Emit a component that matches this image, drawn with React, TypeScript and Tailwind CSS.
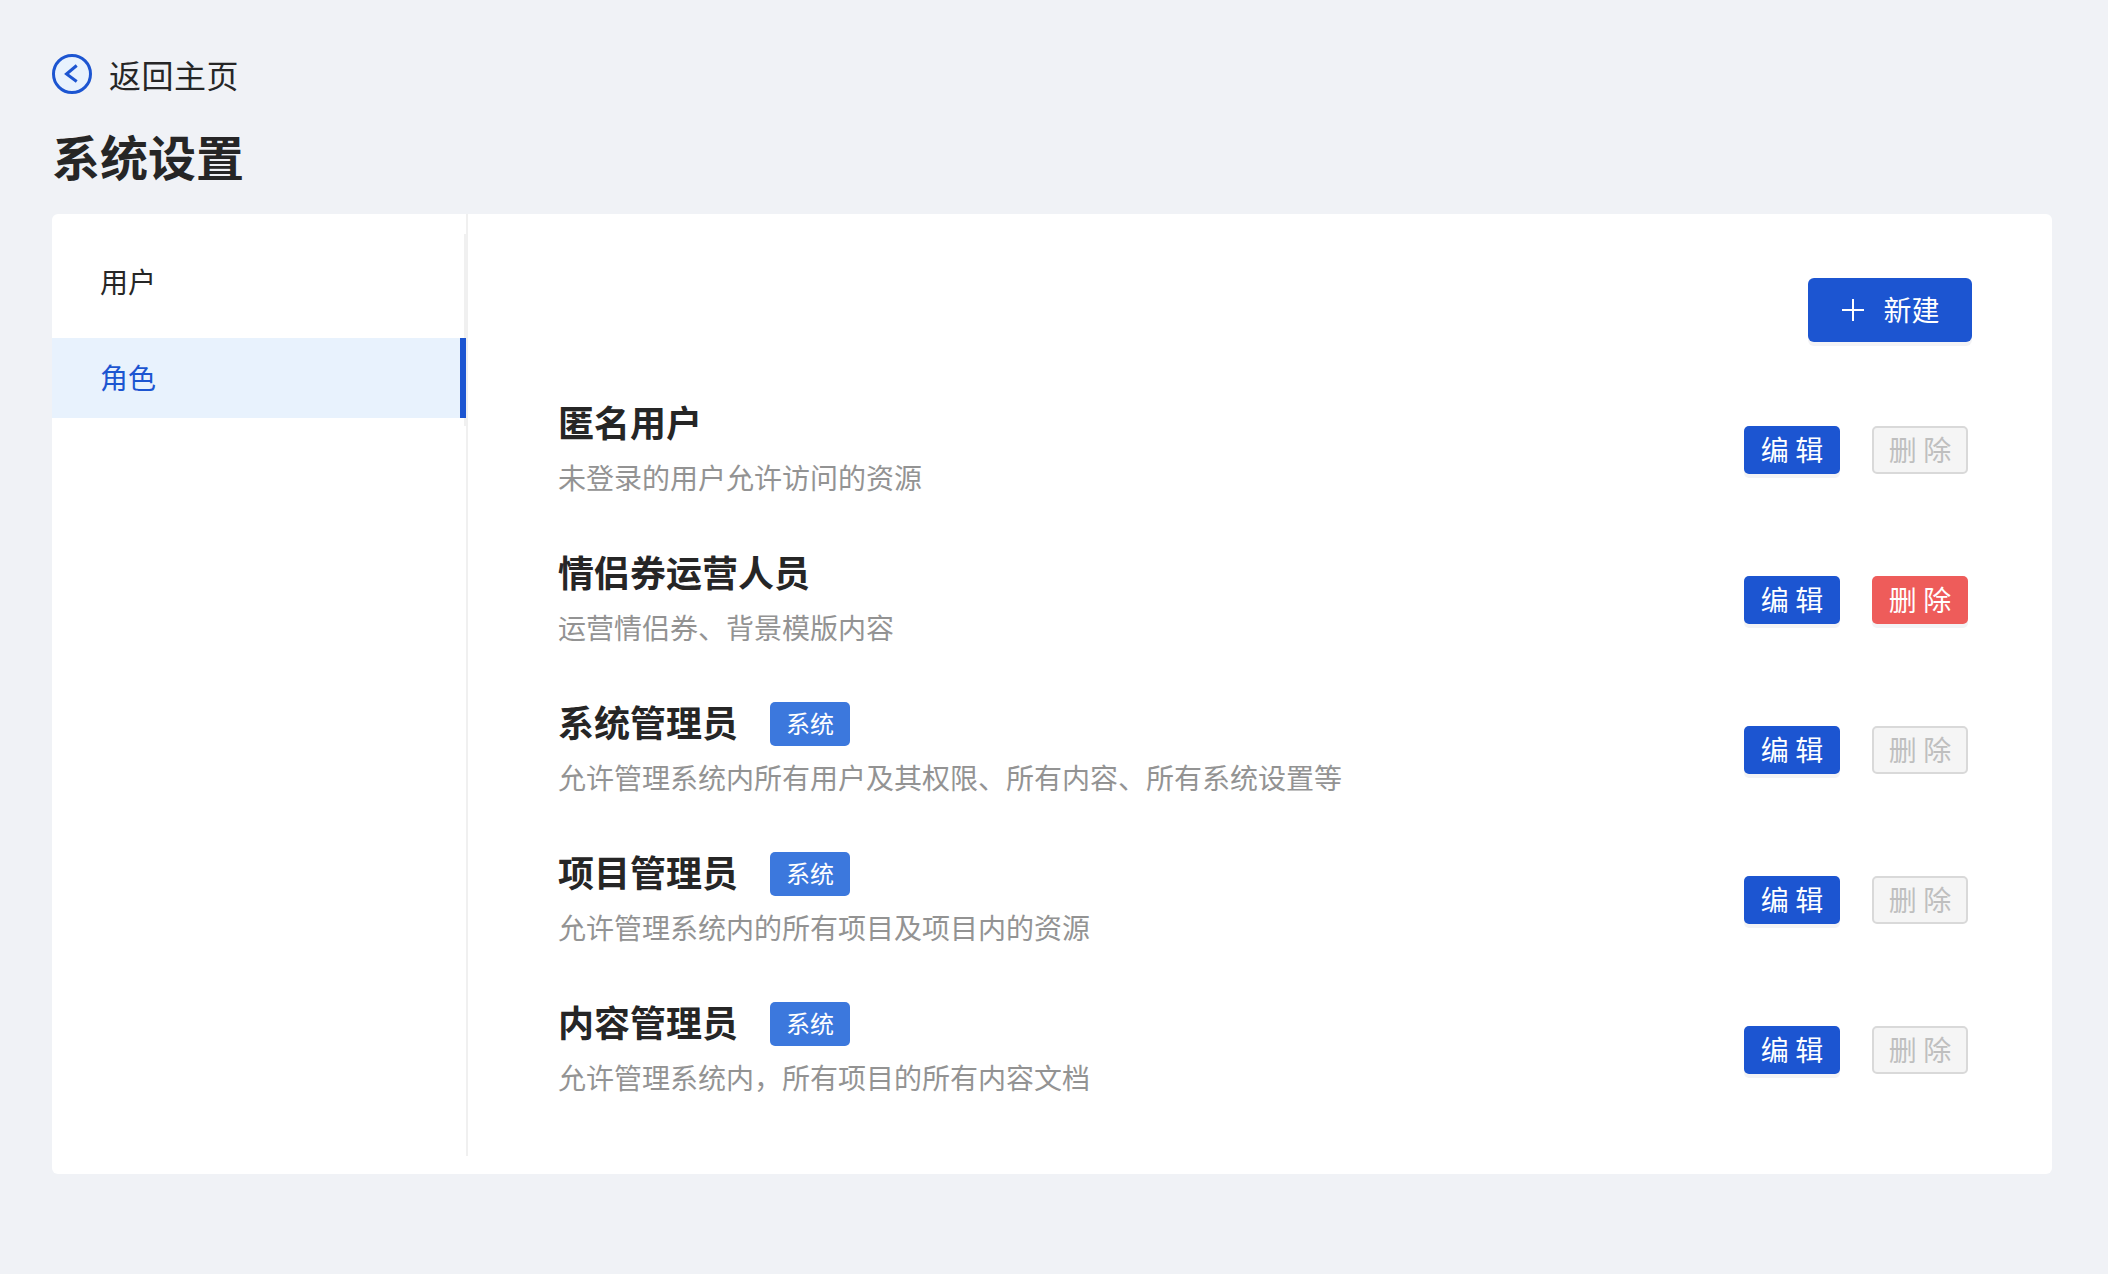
import React from "react";

const roles = [
  { name: "匿名用户", desc: "未登录的用户允许访问的资源", system: false, canDelete: false },
  { name: "情侣券运营人员", desc: "运营情侣券、背景模版内容", system: false, canDelete: true },
  { name: "系统管理员", desc: "允许管理系统内所有用户及其权限、所有内容、所有系统设置等", system: true, canDelete: false },
  { name: "项目管理员", desc: "允许管理系统内的所有项目及项目内的资源", system: true, canDelete: false },
  { name: "内容管理员", desc: "允许管理系统内，所有项目的所有内容文档", system: true, canDelete: false },
];

function RoleRow({ role }: { role: (typeof roles)[number] }) {
  return (
    <div className="flex h-[150px] items-center justify-between pr-[4px]">
      <div className="h-[100px]">
        <div className="mt-[2px] flex h-[44px] items-center">
          <h3 className="pb-[7px] text-[36px] leading-[44px] font-bold text-[#262626]">{role.name}</h3>
          {role.system && (
            <span className="ml-[32px] flex h-[44px] w-[80px] items-center justify-center rounded-[5px] bg-[#3c78dd] pb-[2px] text-[24px] text-white">系统</span>
          )}
        </div>
        <p className="mt-[9px] text-[28px] leading-[44px] text-[#939393]">{role.desc}</p>
      </div>
      <div className="flex gap-[32px]">
        <button className="h-[48px] w-[96px] rounded-[5px] bg-[#1c55d1] pb-[2px] text-[28px] text-white shadow-[0_4px_0_#f3f3f5]">编 辑</button>
        {role.canDelete ? (
          <button className="h-[48px] w-[96px] rounded-[5px] bg-[#ee5c5a] pb-[2px] text-[28px] text-white shadow-[0_4px_0_#f3f3f5]">删 除</button>
        ) : (
          <button className="h-[48px] w-[96px] rounded-[5px] border-2 border-[#d9d9d9] bg-[#f5f5f5] pb-[2px] text-[28px] text-[#bfbfbf]">删 除</button>
        )}
      </div>
    </div>
  );
}

export default function App() {
  return (
    <div className="min-h-screen bg-[#f0f2f6] px-[52px] pt-[54px] font-['Noto_Sans_CJK_SC',sans-serif]">
      <div className="flex h-[40px] items-center gap-[17px]">
        <svg width="40" height="40" viewBox="0 0 40 40" fill="none">
          <circle cx="20" cy="20" r="18.5" fill="#e8f2fd" stroke="#1c55d1" strokeWidth="3" />
          <path d="M24.7 11.5L14.5 20L24.7 27.5" stroke="#1c55d1" strokeWidth="3" />
        </svg>
        <span className="text-[32px] leading-[40px] tracking-[0.5px] text-[#262626]">返回主页</span>
      </div>
      <h1 className="mt-[29px] mb-[27px] text-[48px] leading-[64px] font-bold text-[#262626]">系统设置</h1>

      <div className="flex w-[2000px] rounded-[6px] bg-white pb-[18px]">
        <aside className="w-[416px] shrink-0 border-r-2 border-[#f0f0f0] pt-[20px]">
          <nav className="flex flex-col gap-[16px] border-r-2 border-[#f0f0f0] py-[8px]">
            <a className="flex h-[80px] items-center pb-[3px] pl-[48px] text-[28px] text-[#262626]">用户</a>
            <a className="-mr-[2px] flex h-[80px] items-center border-r-[6px] border-[#1c55d1] bg-[#e8f2fd] pb-[2px] pl-[48px] text-[28px] text-[#1c55d1]">角色</a>
          </nav>
        </aside>
        <main className="flex-1 pt-[64px] pr-[80px] pb-[31px] pl-[90px]">
          <div className="mb-[33px] flex justify-end">
            <button className="flex h-[64px] w-[164px] items-center justify-center gap-[18px] rounded-[6px] bg-[#1c55d1] pl-[1px] text-[28px] text-white shadow-[0_4px_0_#f3f3f5]">
              <svg width="24" height="24" viewBox="0 0 24 24" fill="none" stroke="white" strokeWidth="2">
                <path d="M12 1V23M1 12H23" />
              </svg>
              <span className="pb-[2px]">新建</span>
            </button>
          </div>
          {roles.map((role) => (
            <RoleRow key={role.name} role={role} />
          ))}
        </main>
      </div>
    </div>
  );
}
